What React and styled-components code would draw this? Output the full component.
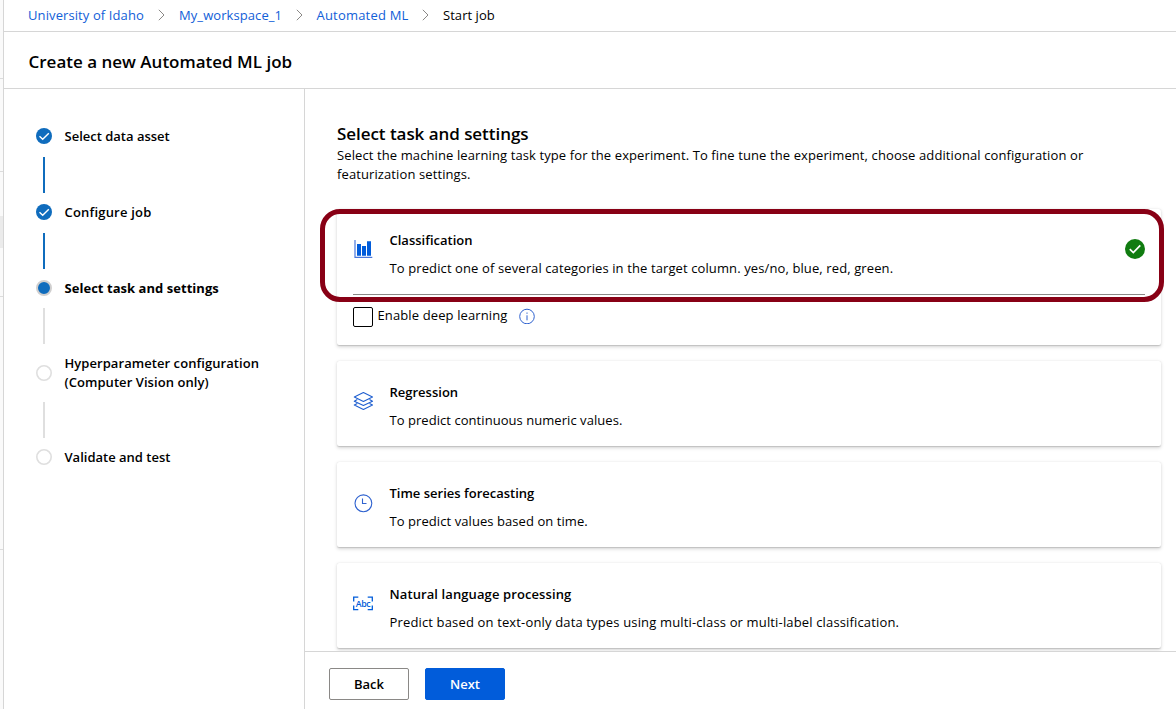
import React from "react";
import styled, { createGlobalStyle } from "styled-components";

const Global = createGlobalStyle`
  * { box-sizing: border-box; }
  body { margin: 0; background: #fff; color: #000; font-family: "Segoe UI", "Open Sans", "Noto Sans", sans-serif; font-size: 13px; overflow: hidden; }
  h1, h2, h3, p { margin: 0; }
`;

const Screen = styled.div`display: flex; width: 1176px; height: 709px; overflow: hidden;`;
const Rail = styled.div`
  display: flex; flex-direction: column; width: 4px; flex: none;
  background: #fafafa; border-right: 1px solid #d6d6d6;
`;
const RailPart = styled.div`
  height: ${p => p.$h}px; flex: none;
  background: ${p => (p.$active ? "#ebebeb" : "transparent")};
  border-bottom: ${p => (p.$line ? "1px solid #dcdcdc" : "none")};
`;
const Page = styled.div`flex: 1; display: flex; flex-direction: column; min-width: 0;`;
const Breadcrumb = styled.nav`
  display: flex; align-items: center; height: 32px; padding: 0 0 1px 24px;
  border-bottom: 1px solid #d6d6d6;
`;
const Crumb = styled.a`
  width: ${p => p.$w}px; white-space: nowrap; line-height: 20px;
  letter-spacing: ${p => p.$ls || 0}px;
  color: ${p => (p.$current ? "#000" : "#1160d8")};
`;
const Chevron = styled.svg`width: 7px; height: 12px; margin: 0 14px; flex: none;`;
const TitleBar = styled.header`
  display: flex; align-items: center; height: 57px; padding: 4px 0 0 24.500px;
  border-bottom: 1px solid #d6d6d6;
`;
const Title = styled.h1`font-size: 17px; font-weight: 600; line-height: 24px; letter-spacing: ${p => p.$ls || 0}px;`;
const Body = styled.div`flex: 1; display: flex; min-height: 0;`;
const Steps = styled.aside`
  width: 301px; flex: none; padding: 37px 0 0 32px;
  border-right: 1px solid #d6d6d6;
`;
const Step = styled.div`display: flex; align-items: center; gap: 12.5px; min-height: ${p => p.$h || 20}px;`;
const StepIcon = styled.svg`width: 16px; height: 16px; flex: none;`;
const StepLabel = styled.span`
  font-weight: ${p => (p.$current ? 700 : 600)}; line-height: 19px; white-space: pre-line;
  letter-spacing: ${p => p.$ls || 0}px;
`;
const Connector = styled.div`
  width: 2px; height: 36px; background: ${p => (p.$done ? "#0f6cbd" : "#dfdfdf")};
  margin: ${p => p.$top}px 0 ${p => p.$bottom}px 7px;
`;
const Main = styled.main`flex: 1; display: flex; flex-direction: column; min-width: 0;`;
const Content = styled.section`flex: 1; min-height: 0; overflow: hidden; padding: 33px 15px 0 32px;`;
const Intro = styled.p`line-height: 19px; height: 38px; letter-spacing: 0.105px; white-space: pre-line;`;
const CardList = styled.div`display: flex; flex-direction: column; gap: 16px; margin-top: 25px;`;
const Card = styled.article`
  position: relative; border-radius: 2px; background: #fff; padding: 0 16px; height: ${p => p.$h || 85}px;
  box-shadow: 0 1.6px 3.6px rgba(0,0,0,.17), 0 .3px .9px rgba(0,0,0,.12);
`;
const CardHead = styled.div`display: flex; align-items: flex-start; height: 85px; padding-top: 21px;`;
const CardIcon = styled.svg`width: 20px; height: 20px; margin: 9px 16.500px 0 0; flex: none; overflow: visible;`;
const CardText = styled.div`flex: 1;`;
const CardTitle = styled.h3`font-size: 13px; font-weight: 600; line-height: 20px; letter-spacing: ${p => p.$ls || 0}px;`;
const CardDesc = styled.p`line-height: 20px; margin-top: 8px; letter-spacing: ${p => p.$ls || 0}px;`;
const Selected = styled.svg`width: 20px; height: 20px; margin-top: 9px;`;
const Option = styled.label`
  display: flex; align-items: flex-start; border-top: 1px solid #8a8886; padding-top: 12px;
`;
const Box = styled.span`width: 20px; height: 20px; border: 1px solid #000; border-radius: 2px; margin-right: 4.500px;`;
const OptionText = styled.span`width: 141.500px; line-height: 20px; margin-top: -2px; letter-spacing: 0.12px;`;
const Info = styled.svg`width: 16px; height: 16px; margin-top: 1px;`;
const Highlight = styled.div`
  position: absolute; left: -17px; top: 0; width: 844px; height: 93px;
  border: 5px solid #880015; border-radius: 20px; pointer-events: none;
`;
const Footer = styled.footer`
  display: flex; gap: 16px; height: 58px; flex: none; padding: 16px 24px;
  border-top: 1px solid #d6d6d6; background: #fff;
`;
const Button = styled.button`
  width: 80px; height: 32px; padding: 0; border-radius: 2px; font: 600 13px "Segoe UI", "Open Sans", sans-serif;
  border: 1px solid ${p => (p.$primary ? "#015cda" : "#8a8886")};
  background: ${p => (p.$primary ? "#015cda" : "#fff")};
  color: ${p => (p.$primary ? "#fff" : "#000")};
`;

const Sep = () => (
  <Chevron viewBox="0 0 7 12" fill="none" stroke="#8a8886"><path d="M.8 .8 6 6 .8 11.2" /></Chevron>
);

const StepMark = ({ state }) => (
  <StepIcon viewBox="0 0 16 16" fill="none">
    {state === "done" && <><circle cx="8" cy="8" r="8" fill="#0f6cbd" /><path d="M3.500 8.200 6.700 11.200 12.800 5.200" stroke="#fff" strokeWidth="1.400" /></>}
    {state === "current" && <><circle cx="8" cy="8" r="7" fill="#0f6cbd" stroke="#d0cfcf" strokeWidth="2" /></>}
    {state === "todo" && <circle cx="8" cy="8" r="7.2" stroke="#dfdfdf" strokeWidth="1.6" />}
  </StepIcon>
);

const icons = {
  chart: <><path d="M2 1v17.300H19.300" stroke="#4a78dc" strokeWidth="1.200" /><path d="M4 5h4v11.800H4zM9 7h4v9.800H9zM14 2.300h4v14.500h-4z" fill="#015cda" /></>,
  layers: <g stroke="#1f5fd0" strokeWidth="1.100" strokeLinejoin="round"><path d="M10.400 1.600 19.500 6 10.400 10.400 1.300 6z" /><path d="M4.300 8.600 1.300 10.200 10.400 14.500l9.100-4.300L16.500 8.600" /><path d="M4.300 12.400 1.300 14 10.400 18.400l9.100-4.400-3-1.600" /></g>,
  clock: <g stroke="#2f62cf" strokeWidth="1.100"><circle cx="10.400" cy="11.300" r="8.400" /><path d="M9.500 6.500v5h4" /></g>,
  abc: (
    <>
      <path d="M5.300 4.200H.700V8.500M.700 12.500v4.200H5.300M14.700 4.200h4.600V8.500M19.300 12.500v4.200H14.700" stroke="#015cda" strokeWidth="1.300" />
      <text x="10.200" y="14" textAnchor="middle" fontSize="8.800" fontWeight="600" fill="#015cda" textLength="15">Abc</text>
    </>
  ),
};

const steps = [
  { label: "Select data asset", state: "done", top: 11, bottom: 9 },
  { label: "Configure job", ls: 0.2, state: "done", top: 11, bottom: 9 },
  { label: "Select task and settings", ls: 0.04, state: "current", top: 10, bottom: 10 },
  { label: "Hyperparameter configuration\n(Computer Vision only)", ls: 0.06, state: "todo", top: 10, bottom: 9, h: 38 },
  { label: "Validate and test", state: "todo" },
];

const tasks = [
  { icon: "chart", title: "Classification", ls: 0.11, desc: "To predict one of several categories in the target column. yes/no, blue, red, green.", selected: true },
  { icon: "layers", title: "Regression", ls: 0.05, desc: "To predict continuous numeric values." },
  { icon: "clock", title: "Time series forecasting", ls: 0.07, desc: "To predict values based on time." },
  { icon: "abc", title: "Natural language processing", ls: 0.15, titleLs: 0.1, desc: "Predict based on text-only data types using multi-class or multi-label classification." },
];

export default function App() {
  return (
    <Screen>
      <Global />
      <Rail>
        <RailPart $h={79} $line />
        <RailPart $h={93} $line />
        <RailPart $h={44} />
        <RailPart $h={32} $active />
        <RailPart $h={49} $line />
        <RailPart $h={253} $line />
      </Rail>
      <Page>
        <Breadcrumb>
          <Crumb $w={116} $ls={0.1}>University of Idaho</Crumb><Sep />
          <Crumb $w={102.5} $ls={0.08}>My_workspace_1</Crumb><Sep />
          <Crumb $w={91.5} $ls={0.2}>Automated ML</Crumb><Sep />
          <Crumb $w={60} $ls={0.05} $current>Start job</Crumb>
        </Breadcrumb>
        <TitleBar><Title>Create a new Automated ML job</Title></TitleBar>
        <Body>
          <Steps>
            {steps.map(s => (
              <React.Fragment key={s.label}>
                <Step $h={s.h}>
                  <StepMark state={s.state} />
                  <StepLabel $current={s.state === "current"} $ls={s.ls}>{s.label}</StepLabel>
                </Step>
                {s.top && <Connector $done={s.state === "done"} $top={s.top} $bottom={s.bottom} />}
              </React.Fragment>
            ))}
          </Steps>
          <Main>
            <Content>
              <Title as="h2" $ls={-0.05}>Select task and settings</Title>
              <Intro>{"Select the machine learning task type for the experiment. To fine tune the experiment, choose additional configuration or\nfeaturization settings."}</Intro>
              <CardList>
                {tasks.map(t => (
                  <Card key={t.title} $h={t.selected ? 136 : 85}>
                    <CardHead>
                      <CardIcon viewBox="0 0 20 20" fill="none">{icons[t.icon]}</CardIcon>
                      <CardText>
                        <CardTitle $ls={t.titleLs}>{t.title}</CardTitle>
                        <CardDesc $ls={t.ls}>{t.desc}</CardDesc>
                      </CardText>
                      {t.selected && (
                        <Selected viewBox="0 0 20 20" fill="none"><circle cx="10" cy="10" r="10" fill="#107c10" /><path d="M4.800 10.200 8.300 13.600 15.300 6.300" stroke="#fff" strokeWidth="1.700" /></Selected>
                      )}
                    </CardHead>
                    {t.selected && (
                      <>
                        <Option>
                          <Box />
                          <OptionText>Enable deep learning</OptionText>
                          <Info viewBox="0 0 16 16" fill="none" stroke="#2f62cf"><circle cx="8" cy="8.500" r="7.300" /><path d="M8 7.300v5M8 4.500v1.300" /></Info>
                        </Option>
                        <Highlight />
                      </>
                    )}
                  </Card>
                ))}
              </CardList>
            </Content>
            <Footer>
              <Button>Back</Button>
              <Button $primary>Next</Button>
            </Footer>
          </Main>
        </Body>
      </Page>
    </Screen>
  );
}
